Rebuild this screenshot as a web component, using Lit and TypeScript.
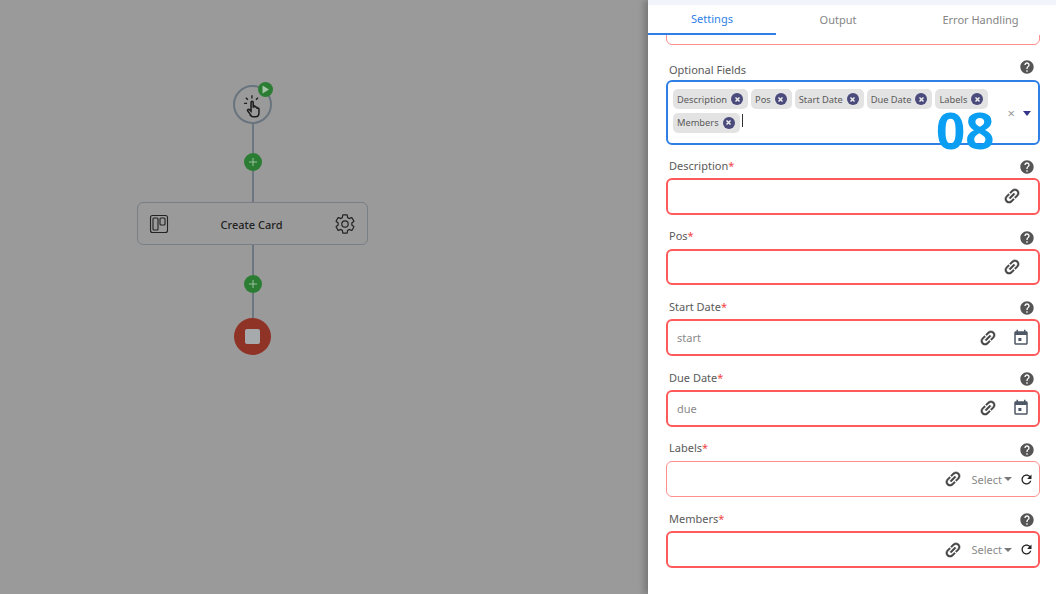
import { LitElement, css, html, svg } from "lit";
import { customElement } from "lit/decorators.js";

const ICONS = {
  link: "M3.9 12c0-1.71 1.39-3.1 3.1-3.1h4V7H7c-2.76 0-5 2.24-5 5s2.24 5 5 5h4v-1.9H7c-1.71 0-3.1-1.39-3.1-3.1zM8 13h8v-2H8v2zm9-6h-4v1.9h4c1.71 0 3.1 1.39 3.1 3.1s-1.39 3.1-3.1 3.1h-4V17h4c2.76 0 5-2.24 5-5s-2.24-5-5-5z",
  event: "M12.5 12h-4v4h4v-4zM16 1v2H8V1H6v2H5c-1.11 0-1.99.9-1.99 2L3 19c0 1.1.89 2 2 2h14c1.1 0 2-.9 2-2V5c0-1.1-.9-2-2-2h-1V1h-2zm3 18H5V8h14v11z",
  refresh: "M17.65 6.35C16.2 4.9 14.21 4 12 4c-4.42 0-7.99 3.58-7.99 8s3.57 8 7.99 8c3.73 0 6.84-2.55 7.73-6h-2.08c-.82 2.33-3.04 4-5.65 4-3.31 0-6-2.69-6-6s2.69-6 6-6c1.66 0 3.14.69 4.22 1.78L13 11h7V4l-2.35 2.35z",
  help: "M12 2C6.48 2 2 6.48 2 12s4.48 10 10 10 10-4.48 10-10S17.52 2 12 2zm1 17h-2v-2h2v2zm2.07-7.75l-.9.92C13.45 12.9 13 13.5 13 15h-2v-.5c0-1.1.45-2.1 1.17-2.83l1.24-1.26c.37-.36.59-.86.59-1.41 0-1.1-.9-2-2-2s-2 .9-2 2H8c0-2.21 1.79-4 4-4s4 1.79 4 4c0 .88-.36 1.68-.93 2.25z",
};

const GEAR =
  "M19.43 12.98c.04-.32.07-.64.07-.98 0-.34-.03-.66-.07-.98l2.11-1.65c.19-.15.24-.42.12-.64l-2-3.46c-.09-.16-.26-.25-.44-.25-.06 0-.12.01-.17.03l-2.49 1c-.52-.4-1.08-.73-1.69-.98l-.38-2.65C14.46 2.18 14.25 2 14 2h-4c-.25 0-.46.18-.49.42l-.38 2.65c-.61.25-1.17.59-1.69.98l-2.49-1c-.06-.02-.12-.03-.18-.03-.17 0-.34.09-.43.25l-2 3.46c-.13.22-.07.49.12.64l2.11 1.65c-.04.32-.07.65-.07.98 0 .33.03.66.07.98l-2.11 1.65c-.19.15-.24.42-.12.64l2 3.46c.09.16.26.25.44.25.06 0 .12-.01.17-.03l2.49-1c.52.4 1.08.73 1.69.98l.38 2.65c.03.24.24.42.49.42h4c.25 0 .46-.18.49-.42l.38-2.65c.61-.25 1.17-.59 1.69-.98l2.49 1c.06.02.12.03.18.03.17 0 .34-.09.43-.25l2-3.46c.12-.22.07-.49-.12-.64l-2.11-1.65z";

const icon = (name: keyof typeof ICONS, size: number, cls = "") => html`<svg
  class=${cls}
  width=${size}
  height=${size}
  viewBox="0 0 24 24"
  fill="currentColor"
>
  ${svg`<path d=${ICONS[name]}></path>`}
</svg>`;

type Field = { label: string; placeholder?: string; kind: "link" | "date" | "select"; pale?: boolean };

const FIELDS: Field[] = [
  { label: "Description", kind: "link" },
  { label: "Pos", kind: "link" },
  { label: "Start Date", placeholder: "start", kind: "date" },
  { label: "Due Date", placeholder: "due", kind: "date" },
  { label: "Labels", kind: "select", pale: true },
  { label: "Members", kind: "select" },
];

const CHIPS = ["Description", "Pos", "Start Date", "Due Date", "Labels", "Members"];

@customElement("app-root")
export class AppRoot extends LitElement {
  static override styles = css`
    :host {
      display: flex;
      width: 1056px;
      height: 594px;
      overflow: hidden;
      position: relative;
      font-family: "Noto Sans", "Open Sans", sans-serif;
      background: #9a9a9a;
    }

    /* flow canvas */
    .canvas {
      flex: 0 0 648px;
      box-sizing: border-box;
      padding: 85px 0 0 137px;
    }
    .flow {
      width: 231px;
      display: flex;
      flex-direction: column;
      align-items: center;
    }
    .trigger {
      position: relative;
      box-sizing: border-box;
      width: 39px;
      height: 39px;
      border: 2px solid #69747e;
      border-radius: 50%;
      color: #1c1c1c;
      display: flex;
      align-items: center;
      justify-content: center;
    }
    .play {
      position: absolute;
      top: -5px;
      right: -3px;
      width: 15px;
      height: 15px;
      border-radius: 50%;
      background: #2b7d33;
      display: flex;
      align-items: center;
      justify-content: center;
    }
    .line {
      width: 2px;
      background: #6b7680;
    }
    .plus {
      width: 18px;
      height: 18px;
      border-radius: 50%;
      background: #2b7d33;
      color: #9cc09f;
      display: flex;
      align-items: center;
      justify-content: center;
    }
    .card {
      box-sizing: border-box;
      width: 231px;
      height: 43px;
      border: 1px solid #787f86;
      border-radius: 6px;
      display: flex;
      align-items: center;
      padding: 0 11px;
      color: #222;
    }
    .card span {
      flex: 1;
      padding-top: 1px;
      text-align: center;
      font-size: 11px;
      font-weight: 500;
    }
    .gear {
      fill: none;
      stroke: currentColor;
      stroke-width: 1.3;
    }
    .stop {
      width: 37px;
      height: 37px;
      border-radius: 50%;
      background: #8f3327;
      display: flex;
      align-items: center;
      justify-content: center;
    }
    .stop i {
      width: 15px;
      height: 15px;
      border-radius: 2px;
      background: #a6aaad;
    }

    /* side panel */
    .panel {
      flex: 1;
      background: #fff;
      box-shadow: -4px 0 6px rgba(0, 0, 0, 0.22);
      display: flex;
      flex-direction: column;
      min-width: 0;
      position: relative;
    }
    .strip {
      height: 5px;
      background: #f1f5fb;
    }
    .tabs {
      display: flex;
      height: 30px;
      box-sizing: border-box;
      font-size: 11px;
      color: #858585;
    }
    .tab {
      display: flex;
      align-items: center;
      justify-content: center;
      box-sizing: border-box;
      padding-bottom: 2px;
    }
    .tab:nth-child(1) {
      width: 128px;
      color: #2f7fe6;
      border-bottom: 2px solid #2f7fe6;
    }
    .tab:nth-child(2) {
      width: 124px;
    }
    .tab:nth-child(3) {
      width: 156px;
      padding-left: 5px;
    }
    .body {
      flex: 1;
      overflow: hidden;
      padding: 0 16px 0 18px;
    }
    .clipped {
      height: 18px;
      margin-top: -10px;
      border: 1px solid #ff8f8f;
      border-radius: 6px;
      margin-bottom: 16px;
    }
    .head {
      display: flex;
      justify-content: space-between;
      align-items: center;
      height: 19px;
      padding: 0 5px 0 3px;
      font-size: 11px;
      color: #5a5a5a;
    }
    .head svg {
      color: #555;
    }
    .opt > span {
      padding-bottom: 2px;
    }
    .opt svg {
      margin-top: -8px;
    }
    .req {
      color: #ef4444;
    }
    .multi {
      box-sizing: border-box;
      height: 65px;
      margin-bottom: 9px;
      border: 2px solid #2f7fe6;
      border-radius: 6px;
      padding: 7px 4px 0 5px;
      display: flex;
    }
    .chips {
      flex: 1;
      display: flex;
      flex-wrap: wrap;
      align-content: flex-start;
      gap: 3.5px 3px;
      min-width: 0;
    }
    .chip {
      height: 20px;
      box-sizing: border-box;
      padding: 0 5px 0 4px;
      border-radius: 5px;
      background: #e3e3e3;
      color: #5a5a5a;
      font-size: 9.3px;
      display: flex;
      align-items: center;
      gap: 4px;
    }
    .chip b {
      width: 12px;
      height: 12px;
      border-radius: 50%;
      background: #4a4a7c;
      color: #eee;
      display: flex;
      align-items: center;
      justify-content: center;
    }
    .caret {
      width: 1px;
      height: 13px;
      background: #333;
      margin: 1px 0 0 -1px;
    }
    .multi-end {
      display: flex;
      align-items: center;
      gap: 8px;
      height: 48px;
      padding: 0 3px 0 0;
      color: #999;
      font-size: 13px;
    }
    .arrow {
      width: 0;
      height: 0;
      border: 4px solid transparent;
      border-top: 5px solid #35358a;
      border-bottom: 0;
    }
    .field {
      height: 70.7px;
    }
    .field .head {
      height: 24px;
    }
    .field .head > span {
      padding-bottom: 2px;
    }
    .field .head svg {
      margin-top: 2px;
    }
    .box {
      box-sizing: border-box;
      height: 36.5px;
      border: 2px solid #ff5a5a;
      border-radius: 6px;
      display: flex;
      align-items: center;
      justify-content: flex-end;
      padding-left: 9px;
      color: #444;
    }
    .box.pale {
      border: 1px solid #ff8f8f;
      padding-right: 1px;
    }
    .ph {
      flex: 1;
      font-size: 11px;
      color: #8a8a8a;
    }
    .link {
      transform: rotate(-45deg);
      stroke: currentColor;
      stroke-width: 0.6;
    }
    .link-only {
      margin-right: 16px;
    }
    .date {
      margin: 0 8px 0 14px;
      color: #4f5866;
    }
    .sel {
      margin-left: 8.5px;
      font-size: 11px;
      color: #8a8a8a;
      display: flex;
      align-items: center;
      gap: 2px;
    }
    .sel i {
      width: 0;
      height: 0;
      border: 4.5px solid transparent;
      border-top: 4.5px solid #777;
      border-bottom: 0;
    }
    .refresh {
      margin: 0 4.5px 0 6.5px;
      color: #222;
    }
    .badge {
      position: absolute;
      left: 288px;
      top: 104px;
      font-size: 51px;
      line-height: 50px;
      font-weight: 700;
      color: #0a9ff2;
    }
  `;

  private renderField(f: Field) {
    return html`<div class="field">
      <div class="head">
        <span>${f.label}<span class="req">*</span></span>
        ${icon("help", 16)}
      </div>
      <div class="box ${f.pale ? "pale" : ""}">
        ${f.placeholder ? html`<span class="ph">${f.placeholder}</span>` : ""}
        ${icon("link", 20, f.kind === "link" ? "link link-only" : "link")}
        ${f.kind === "date" ? icon("event", 18, "date") : ""}
        ${f.kind === "select"
          ? html`<span class="sel">Select<i></i></span>${icon("refresh", 15, "refresh")}`
          : ""}
      </div>
    </div>`;
  }

  override render() {
    const plus = html`<div class="plus">
      <svg width="10" height="10" viewBox="0 0 10 10" stroke="currentColor" stroke-width="1">
        <path d="M5 1v8M1 5h8"></path>
      </svg>
    </div>`;
    return html`
      <div class="canvas">
        <div class="flow">
          <div class="trigger">
            <svg width="26" height="26" viewBox="0 0 24 24" fill="none" stroke="currentColor" stroke-width="1.4">
              <path d="M10.5 22 7.2 17.6c-.8-1.100.5-2.200 1.500-1.300l1.500 1.400V9.600c0-1.300 2-1.300 2 0v5-1c0-1.100 1.800-1.100 1.800 0v1c0-1.100 1.800-1.100 1.800 0v1c0-1 1.700-1 1.700 0v3.500c0 2.200-1.100 3.700-2.900 3.700h-2.900c-.8 0-1.300-.3-1.700-.8z"></path>
              <path d="M11 6V3M7.300 7.200 5.400 5.300M14.700 7.200l1.900-1.900M6.500 10.500H3.800" stroke-width="1.200"></path>
            </svg>
            <div class="play">
              <svg width="9" height="9" viewBox="0 0 9 9"><path d="M1.500.5 8 4.500 1.500 8.500z" fill="#a6c4a8"></path></svg>
            </div>
          </div>
          <div class="line" style="height:29px"></div>
          ${plus}
          <div class="line" style="height:31px"></div>
          <div class="card">
            <svg width="20" height="20" viewBox="0 0 20 20" fill="none" stroke="currentColor" stroke-width="1.1">
              <rect x="1.500" y="1.500" width="17" height="17" rx="2"></rect>
              <rect x="4" y="4" width="5" height="12" rx="1"></rect>
              <rect x="11" y="4" width="5" height="7" rx="1"></rect>
            </svg>
            <span>Create Card</span>
            <svg class="gear" width="22" height="22" viewBox="0 0 24 24">
              <path d=${GEAR}></path>
              <circle cx="12" cy="12" r="3.500"></circle>
            </svg>
          </div>
          <div class="line" style="height:30px"></div>
          ${plus}
          <div class="line" style="height:25px"></div>
          <div class="stop"><i></i></div>
        </div>
      </div>
      <div class="panel">
        <div class="strip"></div>
        <div class="tabs">
          <div class="tab">Settings</div>
          <div class="tab">Output</div>
          <div class="tab">Error Handling</div>
        </div>
        <div class="body">
          <div class="clipped"></div>
          <div class="head opt">
            <span>Optional Fields</span>
            ${icon("help", 16)}
          </div>
          <div class="multi">
            <div class="chips">
              ${CHIPS.map(
                (c) => html`<div class="chip">
                  ${c}
                  <b>
                    <svg width="7" height="7" viewBox="0 0 7 7" stroke="currentColor" stroke-width="1.500">
                      <path d="M1.500 1.500l4 4M5.500 1.500l-4 4"></path>
                    </svg>
                  </b>
                </div>`
              )}
              <div class="caret"></div>
            </div>
            <div class="multi-end">
              <span>×</span>
              <div class="arrow"></div>
            </div>
          </div>
          ${FIELDS.map((f) => this.renderField(f))}
        </div>
        <div class="badge">08</div>
      </div>
    `;
  }
}

declare global {
  interface HTMLElementTagNameMap {
    "app-root": AppRoot;
  }
}
